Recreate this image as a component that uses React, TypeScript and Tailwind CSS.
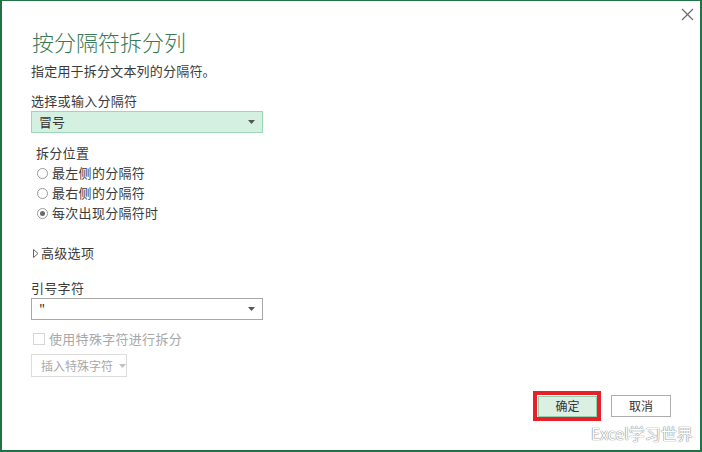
import React from "react";

const font = { fontFamily: '"Noto Sans CJK SC", "Microsoft YaHei", sans-serif' };

function Arrow({ color = "#555" }: { color?: string }) {
  return (
    <svg width="7" height="4" viewBox="0 0 7 4" className="block">
      <path d="M0 0 H7 L3.5 4 Z" fill={color} />
    </svg>
  );
}

function Radio({ checked, label }: { checked?: boolean; label: string }) {
  return (
    <div className="flex h-[20px] items-center">
      <span className="flex h-[11px] w-[11px] items-center justify-center rounded-full border border-[#9a9a9a] bg-white">
        {checked && <span className="h-[5px] w-[5px] rounded-full bg-[#6a6a6a]" />}
      </span>
      <span className="ml-[4px] text-[13px] tracking-[0.3px] text-[#3a3a3a]">{label}</span>
    </div>
  );
}

export default function App() {
  return (
    <div
      className="relative h-[452px] w-[702px] overflow-hidden border-x-2 border-b-2 border-t border-[#217346] bg-white"
      style={font}
    >
      <svg className="absolute left-[679px] top-[7px]" width="13" height="13" viewBox="0 0 13 13">
        <path d="M1 1 L12 12 M12 1 L1 12" stroke="#6b6b6b" strokeWidth="1.2" />
      </svg>

      <div className="flex flex-col pl-[29px] pt-[25px]">
        <div className="ml-[1px] h-[30px] text-[22px] font-light leading-[30px] text-[#3b7a58]">按分隔符拆分列</div>
        <div className="mt-[5px] h-[20px] text-[13px] leading-[20px] tracking-[0.2px] text-[#3a3a3a]">指定用于拆分文本列的分隔符。</div>
        <div className="mt-[10px] h-[20px] text-[13px] leading-[20px] tracking-[0.3px] text-[#3a3a3a]">选择或输入分隔符</div>
        <div className="flex h-[22px] w-[232px] items-center justify-between border border-[#9fd6b7] bg-[#d3f0e0] pl-[7px] pr-[7px]">
          <span className="text-[13px] text-[#333]">冒号</span>
          <Arrow />
        </div>
        <div className="ml-[5px] mt-[10px] h-[20px] text-[13px] leading-[20px] tracking-[0.3px] text-[#3a3a3a]">拆分位置</div>
        <div className="ml-[6px] flex flex-col">
          <Radio label="最左侧的分隔符" />
          <Radio label="最右侧的分隔符" />
          <Radio checked label="每次出现分隔符时" />
        </div>
        <div className="mt-[20px] flex h-[20px] items-center">
          <svg width="6" height="9" viewBox="0 0 6 9" className="ml-[2px]">
            <path d="M0.5 0.5 L5 4.5 L0.5 8.5 Z" fill="none" stroke="#666" strokeWidth="1" />
          </svg>
          <span className="ml-[2px] text-[13px] tracking-[0.3px] text-[#3a3a3a]">高级选项</span>
        </div>
        <div className="mt-[15px] h-[20px] text-[13px] leading-[20px] tracking-[0.3px] text-[#3a3a3a]">引号字符</div>
        <div className="flex h-[22px] w-[232px] items-center justify-between border border-[#a8a8a8] bg-white pl-[7px] pr-[7px]">
          <span className="text-[13px] text-[#333]">"</span>
          <Arrow />
        </div>
        <div className="mt-[9px] flex h-[20px] items-center">
          <span className="ml-[2px] h-[12px] w-[12px] border border-[#d6d6d6] bg-white" />
          <span className="ml-[4px] text-[13px] tracking-[0.3px] text-[#a8a8a8]">使用特殊字符进行拆分</span>
        </div>
        <div className="mt-[5px] flex h-[23px] w-[96px] items-center border border-[#dcdcdc] bg-white pl-[9px]">
          <span className="text-[12px] text-[#a8a8a8]">插入特殊字符</span>
          <span className="ml-[6px]">
            <Arrow color="#c0c0c0" />
          </span>
        </div>
      </div>

      <div className="mt-[14px] flex items-center justify-end pr-[29px]">
        <div className="flex h-[30px] w-[68px] items-center border-[4px] border-[#e8202a] pl-[1px]">
          <div className="flex h-[21px] w-[59px] items-center justify-center border border-[#92d1ab] bg-[#dbf0e3] text-[12px] text-[#333]">
            确定
          </div>
        </div>
        <div className="ml-[10px] flex h-[22px] w-[60px] items-center justify-center border border-[#adadad] bg-white text-[12px] text-[#333]">
          取消
        </div>
      </div>

      <div
        className="absolute left-[589px] top-[422px] whitespace-nowrap text-[16px] leading-[20px] text-white"
        style={{
          fontFamily: '"Noto Sans CJK SC", sans-serif',
          textShadow: "0 0 1px #777, 0 0 1px #777",
        }}
      >
        Excel学习世界
      </div>
    </div>
  );
}
